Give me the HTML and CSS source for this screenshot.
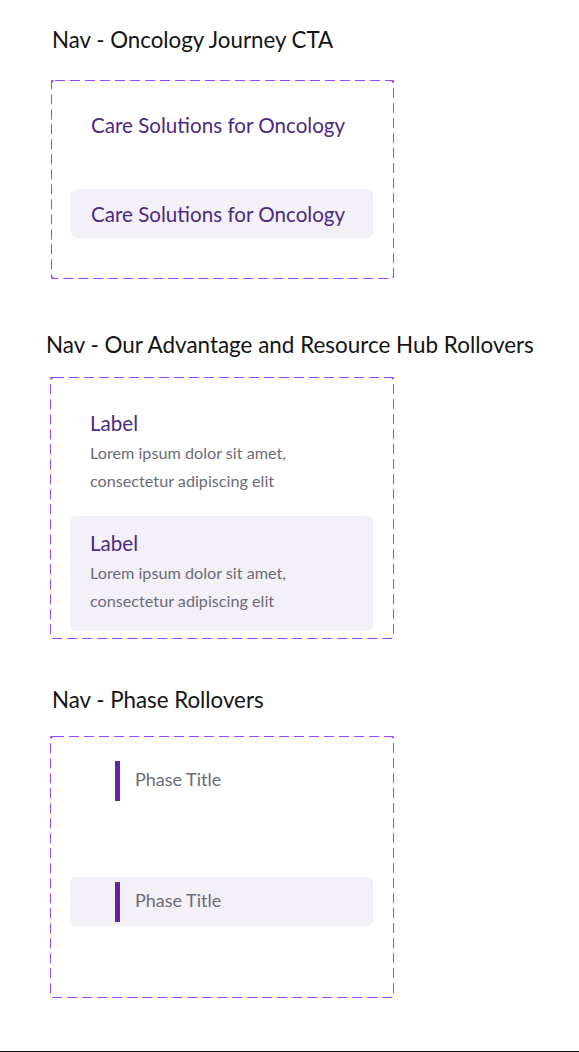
FILE: index.html
```html
<!DOCTYPE html>
<html>

<head>
    <title>Nav rollovers</title>
    <meta name="viewport" content="width=device-width, initial-scale=1">
    <link rel="stylesheet" href="styles.css">
</head>

<body>

<div class="page">

    <!-- Oncology Journey CTA -->
    <section class="section section-cta">
        <h2 class="title">Nav - Oncology Journey CTA</h2>
        <div class="frame frame-cta">
            <div class="cta-item">Care Solutions for Oncology</div>
            <div class="cta-item is-hover">Care Solutions for Oncology</div>
        </div>
    </section>

    <!-- Our Advantage / Resource Hub -->
    <section class="section section-hub">
        <h2 class="title">Nav - Our Advantage and Resource Hub Rollovers</h2>
        <div class="frame frame-hub">
            <div class="hub-item">
                <div class="hub-label">Label</div>
                <p class="hub-text">Lorem ipsum dolor sit amet,<br>consectetur adipiscing elit</p>
            </div>
            <div class="hub-item is-hover">
                <div class="hub-label">Label</div>
                <p class="hub-text">Lorem ipsum dolor sit amet,<br>consectetur adipiscing elit</p>
            </div>
        </div>
    </section>

    <!-- Phase -->
    <section class="section section-phase">
        <h2 class="title">Nav - Phase Rollovers</h2>
        <div class="frame frame-phase">
            <div class="phase-item">
                <span class="phase-bar"></span>
                <span class="phase-title">Phase Title</span>
            </div>
            <div class="phase-item is-hover">
                <span class="phase-bar"></span>
                <span class="phase-title">Phase Title</span>
            </div>
        </div>
    </section>

</div>

</body>
</html>
```

FILE: styles.css
```css
* {
  box-sizing: border-box;
}

body {
  margin: 0;
  background: #fff;
  font-family: "Lato", "Noto Sans", sans-serif;
}

.page {
  height: 1052px;
  border-bottom: 1px solid #111;
  overflow: hidden;
}

.title {
  margin: 0;
  font-size: 22.3px;
  line-height: 28px;
  font-weight: 400;
  color: #141414;
  white-space: nowrap;
}

/* dashed frame, 10/5 dashes like the design tool */
.frame {
  width: 344px;
  margin-left: 50px;
  background: url("data:image/svg+xml,%3Csvg xmlns='http://www.w3.org/2000/svg' width='100%25' height='100%25'%3E%3Crect width='100%25' height='100%25' rx='4' fill='none' stroke='%239747FF' stroke-width='2' stroke-dasharray='10 5'/%3E%3C/svg%3E") no-repeat;
}

.is-hover {
  background-color: #f3f0f8;
  border-radius: 6px;
}

/* section 1 */
.section-cta {
  padding-top: 26px;
}

.section-cta .title {
  margin-left: 52px;
  margin-bottom: 26px;
}

.frame-cta {
  margin-left: 51px;
  width: 343px;
  height: 199px;
  padding: 20px 21px 0 20px;
  display: flex;
  flex-direction: column;
  gap: 40px;
}

.cta-item {
  height: 49px;
  padding-left: 20px;
  display: flex;
  align-items: center;
  font-size: 20.6px;
  color: #4b2a7f;
}

/* section 2 */
.section-hub {
  padding-top: 52px;
}

.section-hub .title {
  margin-left: 46px;
  font-size: 22.45px;
  margin-bottom: 18px;
}

.frame-hub {
  height: 262px;
  padding: 19px 21px 0 20px;
  display: flex;
  flex-direction: column;
  gap: 5px;
}

.hub-item {
  height: 115px;
  padding: 12px 20px 0 20px;
}

.hub-label {
  font-size: 20.6px;
  line-height: 30px;
  color: #4b2a7f;
}

.hub-text {
  margin: 1px 0 0 0;
  font-size: 16.2px;
  line-height: 28px;
  color: #6d6b78;
}

/* section 3 */
.section-phase {
  padding-top: 47px;
}

.section-phase .title {
  margin-left: 52px;
  margin-bottom: 22px;
}

.frame-phase {
  height: 262px;
  padding: 20px 21px 0 20px;
  display: flex;
  flex-direction: column;
  gap: 72px;
}

.phase-item {
  height: 49px;
  padding: 4px 0 4px 45px;
  display: flex;
  align-items: center;
}

.phase-bar {
  width: 5px;
  height: 40px;
  background: #6325a8;
}

.phase-title {
  margin-left: 15px;
  margin-bottom: 3px;
  font-size: 18px;
  color: #6d6b78;
}
```
